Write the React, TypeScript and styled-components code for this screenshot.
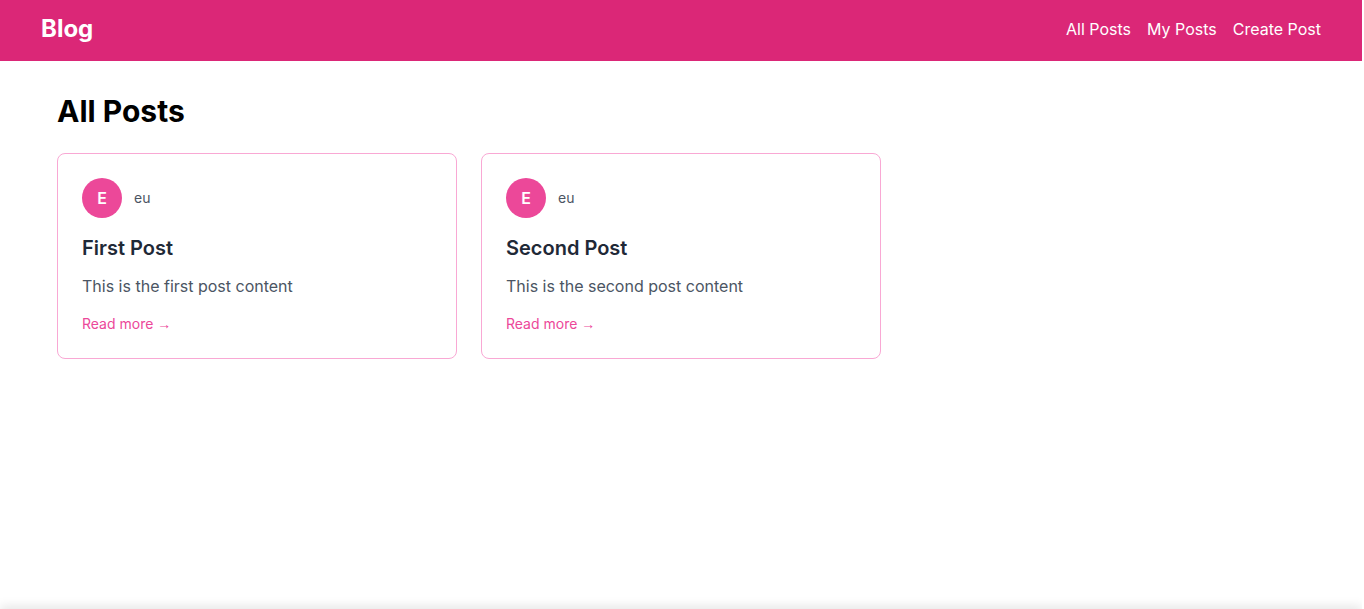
import React from "react";
import styled, { createGlobalStyle } from "styled-components";

const GlobalStyle = createGlobalStyle`
  html { overflow: hidden; }
  body {
    margin: 0 2px 0 0;
    font-family: Inter, "Noto Sans", "Liberation Sans", sans-serif;
    background: #ffffff;
    color: #111827;
  }
  * { box-sizing: border-box; }
`;

const Page = styled.div`
  min-height: 100vh;
  display: flex;
  flex-direction: column;
`;

const Header = styled.header`
  background: #db2777;
  height: 61px;
  flex-shrink: 0;
  margin-right: -2px;
  padding-right: 2px;
`;

const HeaderInner = styled.div`
  max-width: 1280px;
  height: 100%;
  margin: 0 auto;
  padding-bottom: 3px;
  display: flex;
  align-items: center;
  justify-content: space-between;
`;

const Logo = styled.a`
  color: #ffffff;
  font-size: 24px;
  line-height: 32px;
  font-weight: 700;
  text-decoration: none;
`;

const Nav = styled.nav`
  display: flex;
  gap: 16px;
`;

const NavLink = styled.a`
  color: #ffffff;
  font-size: 16px;
  line-height: 24px;
  text-decoration: none;
`;

const Main = styled.main`
  flex: 1;
  width: 100%;
  max-width: 1280px;
  margin: 0 auto;
  padding: 32px 16px;
`;

const Title = styled.h1`
  margin: 0 0 24px;
  font-size: 30px;
  line-height: 36px;
  font-weight: 700;
  color: #000000;
`;

const Grid = styled.div`
  display: grid;
  grid-template-columns: repeat(3, 1fr);
  gap: 24px;
`;

const Card = styled.article`
  border: 1px solid #f9a8d4;
  border-radius: 8px;
  padding: 24px;
  background: #ffffff;
`;

const Author = styled.div`
  display: flex;
  align-items: center;
  gap: 12px;
`;

const Avatar = styled.div`
  width: 40px;
  height: 40px;
  border-radius: 50%;
  background: #ec4899;
  color: #ffffff;
  display: flex;
  align-items: center;
  justify-content: center;
  font-size: 16px;
  font-weight: 600;
`;

const AuthorName = styled.span`
  font-size: 14px;
  line-height: 20px;
  color: #4b5563;
`;

const PostTitle = styled.h2`
  margin: 16px 0 0;
  font-size: 20px;
  line-height: 28px;
  font-weight: 600;
  color: #1f2937;
`;

const PostBody = styled.p`
  margin: 12px 0 0;
  font-size: 16px;
  line-height: 24px;
  color: #4b5563;
`;

const ReadMore = styled.a`
  display: inline-block;
  margin-top: 16px;
  font-size: 14px;
  line-height: 20px;
  color: #ec4899;
  text-decoration: none;
`;

const Arrow = styled.span`
  font-family: "Liberation Sans", sans-serif;
`;

const Footer = styled.footer`
  height: 60px;
  flex-shrink: 0;
  background: #ffffff;
  box-shadow: 0 -3px 10px rgba(0, 0, 0, 0.1);
`;

const posts = [
  { id: 1, title: "First Post", body: "This is the first post content" },
  { id: 2, title: "Second Post", body: "This is the second post content" },
];

export default function App() {
  return (
    <>
      <GlobalStyle />
      <Page>
        <Header>
          <HeaderInner>
            <Logo href="#">Blog</Logo>
            <Nav>
              <NavLink href="#">All Posts</NavLink>
              <NavLink href="#">My Posts</NavLink>
              <NavLink href="#">Create Post</NavLink>
            </Nav>
          </HeaderInner>
        </Header>
        <Main>
          <Title>All Posts</Title>
          <Grid>
            {posts.map((p) => (
              <Card key={p.id}>
                <Author>
                  <Avatar>E</Avatar>
                  <AuthorName>eu</AuthorName>
                </Author>
                <PostTitle>{p.title}</PostTitle>
                <PostBody>{p.body}</PostBody>
                <ReadMore href="#">
                  Read more <Arrow>→</Arrow>
                </ReadMore>
              </Card>
            ))}
          </Grid>
        </Main>
      </Page>
      <Footer />
    </>
  );
}
